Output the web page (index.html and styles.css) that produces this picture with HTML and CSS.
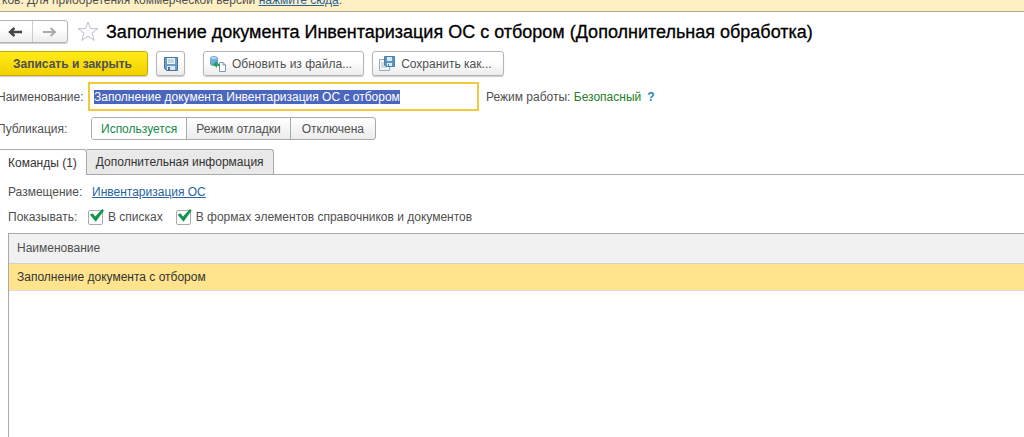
FILE: index.html
```html
<!DOCTYPE html>
<html lang="ru">
<head>
<meta charset="utf-8">
<title>Заполнение документа Инвентаризация ОС с отбором</title>
<link rel="stylesheet" href="styles.css">
</head>
<body>
<div class="notice"><p class="notice-text">ков. Для приобретения коммерческой версии <a href="#">нажмите сюда</a>.</p></div>
<main class="form">
  <header class="heading">
    <div class="history">
      <button type="button" aria-label="Назад"><svg width="14" height="10" viewBox="0 0 14 10"><path d="M14 5H3M6.500 1L2 5l4.500 4" fill="none" stroke="#444" stroke-width="2.400"/></svg></button>
      <button type="button" aria-label="Вперед"><svg width="14" height="10" viewBox="0 0 14 10"><path d="M0 5h11M7.500 1L12 5 7.500 9" fill="none" stroke="#aaa" stroke-width="2"/></svg></button>
    </div>
    <button type="button" class="star" aria-label="Избранное"><svg width="22" height="21" viewBox="0 0 22 21"><path d="M11 1.200l2.500 6.500h7.300l-5.800 4.500 2.200 7.200L11 15.200l-6.200 4.200L7 12.200 1.200 7.700h7.300z" fill="#fff" stroke="#b9bec8"/></svg></button>
    <h1>Заполнение документа Инвентаризация ОС с отбором (Дополнительная обработка)</h1>
  </header>
  <div class="toolbar">
    <button type="button" class="btn primary">Записать и закрыть</button>
    <button type="button" class="btn icon-only" aria-label="Записать"><svg width="14" height="14" viewBox="0 0 14 14"><path d="M.5.500h13v13h-11l-2-2z" fill="#6e9cc5" stroke="#46749f"/><path d="M3 1h8v6H3z" fill="#edf4fa"/><path d="M4 3h6M4 5h6" stroke="#9bb9d3"/><path d="M3 9h8v4H3z" fill="#dce6ed"/><path d="M4 10h2v3H4z" fill="#46749f"/></svg></button>
    <button type="button" class="btn update"><svg width="16" height="16" viewBox="0 0 16 16"><path d="M.5 2v6c0 2 7 2 7 0V2z" fill="#6faed8" stroke="#67a3cc"/><ellipse cx="4" cy="2" rx="3.500" ry="1.500" fill="#b9ddf2" stroke="#79b1d5"/><path d="M9.500 6.500h3.500l2.500 2.500v6.500h-6z" fill="#fff" stroke="#8298ad"/><path d="M13 6.500V9h2.500" fill="none" stroke="#8298ad"/><path d="M3 8.500L7 5v2.300c2 0 3 1.500 3 4.200-1-1.200-1.700-1.700-3-1.700V12z" fill="#2aa052"/></svg>Обновить из файла...</button>
    <button type="button" class="btn"><svg width="16" height="16" viewBox="0 0 16 16"><path d="M.5 3.500h10v11H.5z" fill="#f5f8fa" stroke="#91a8bd"/><path d="M2 7h3M2 9h4M2 11h6" stroke="#b0bfcd"/><path d="M5.500.500h10v10H7l-1.500-1.500z" fill="#5e94c1" stroke="#4a7dab"/><path d="M8 1h5v4H8z" fill="#d9ebf6"/><path d="M8 7h5v3H8z" fill="#e5edf3"/><path d="M9 8h1v2H9z" fill="#4a7dab"/></svg>Сохранить как...</button>
  </div>
  <div class="field">
    <label class="caption" for="name">Наименование:</label>
    <input class="name" id="name" type="text" value="Заполнение документа Инвентаризация ОС с отбором" autofocus>
    <span class="mode">Режим работы: <span class="safe">Безопасный</span></span>
    <a class="help" href="#">?</a>
  </div>
  <div class="publication">
    <span class="caption" id="publication">Публикация:</span>
    <div class="segments" role="group" aria-labelledby="publication">
      <button type="button" class="active" aria-pressed="true">Используется</button>
      <button type="button">Режим отладки</button>
      <button type="button">Отключена</button>
    </div>
  </div>
  <div class="tabs" role="tablist">
    <button type="button" role="tab" class="active" aria-selected="true">Команды (1)</button>
    <button type="button" role="tab" aria-selected="false">Дополнительная информация</button>
  </div>
  <section class="panel">
    <div class="placement"><span class="label">Размещение:</span><a href="#">Инвентаризация ОС</a></div>
    <div class="show">
      <span class="label">Показывать:</span>
      <label class="check"><input type="checkbox" checked>В списках</label>
      <label class="check"><input type="checkbox" checked>В формах элементов справочников и документов</label>
    </div>
    <div class="grid">
      <table>
        <thead><tr><th>Наименование</th></tr></thead>
        <tbody><tr><td>Заполнение документа с отбором</td></tr></tbody>
      </table>
    </div>
  </section>
</main>
<script src="form.js"></script>
</body>
</html>
```
FILE: styles.css
```css
* { box-sizing: border-box; }
body {
  margin: 0;
  min-height: 100vh;
  display: flex;
  flex-direction: column;
  overflow: hidden;
  background: #fff;
  color: #505050;
  font: 12px/16px "Liberation Sans", Arial, sans-serif;
}
button, input { font: inherit; color: inherit; }
button { padding: 0; }
a { color: #2a639c; }
svg { display: block; flex: none; }
.notice {
  height: 12px;
  display: flex;
  align-items: flex-end;
  background: #fff0c4;
  border-bottom: 1px solid #aaa79f;
}
.notice-text { margin: 0 0 3px 2px; white-space: nowrap; }
.form { flex: 1; display: flex; flex-direction: column; margin-left: -3px; }
.heading { display: flex; align-items: center; margin-top: 8px; height: 23px; }
.history {
  display: flex;
  width: 71px;
  height: 23px;
  border: 1px solid #b5b5b5;
  border-radius: 3px;
  background: linear-gradient(#fff 40%, #ececec);
  box-shadow: 0 1px 1px #ccc;
}
.history button {
  flex: 1;
  display: grid;
  place-items: center;
  border: 0;
  background: none;
}
.history button + button { border-left: 1px solid #ccc; }
.star { margin-left: 9px; border: 0; background: none; }
h1 {
  margin: 0 0 0 7px;
  color: #000;
  font-size: 18px;
  line-height: 22px;
  font-weight: 400;
  -webkit-text-stroke: 0.3px #000;
  white-space: nowrap;
}
.toolbar { display: flex; margin-top: 8px; }
.btn {
  display: flex;
  align-items: center;
  gap: 6px;
  height: 25px;
  padding: 0 11px 0 6px;
  border: 1px solid #b5b5b5;
  border-radius: 3px;
  background: linear-gradient(#fff 40%, #ececec);
  box-shadow: 0 1px 1px #ccc;
  white-space: nowrap;
}
.btn.primary {
  justify-content: center;
  width: 151px;
  padding: 0;
  border-color: #c9a900;
  background: linear-gradient(#ffec18, #f2d000);
  font-weight: 700;
}
.icon-only { justify-content: center; width: 29px; padding: 0; margin-left: 8px; }
.update { margin: 0 8px 0 18px; }
.field { display: flex; align-items: center; margin-top: 6px; }
.caption { width: 91px; flex: none; }
.name {
  width: 391px;
  height: 29px;
  padding: 0 4px;
  border: 2px solid #f0c93c;
  outline: 0;
  background: #fff;
}
.name::selection { background: #4a66bd; color: #fff; }
.mode { margin-left: 7px; }
.safe { color: #238023; }
.help { margin-left: 6px; color: #2682bd; font-weight: 700; text-decoration: none; }
.publication { display: flex; align-items: center; margin-top: 6px; }
.segments {
  display: flex;
  border: 1px solid #aaa;
  border-radius: 3px;
  background: linear-gradient(#fff, #ececec);
  overflow: hidden;
}
.publication .caption { width: 94px; }
.segments button { height: 21px; padding: 0 9px; border: 0; background: none; }
.segments button + button { border-left: 1px solid #aaa; }
.segments button:last-child { padding: 0 11px; }
.segments .active { background: #fff; color: #158a4b; }
.tabs { display: flex; margin-top: 9px; border-bottom: 1px solid #aaa; }
.tabs button {
  height: 25px;
  padding: 0 9px;
  border: 1px solid #aaa;
  border-left-width: 0;
  border-bottom: 0;
  border-radius: 0 3px 0 0;
  background: #e9e9e9;
  color: #333;
}
.tabs .active {
  padding-left: 11px;
  margin-bottom: -1px;
  height: 26px;
  background: #fff;
}
.panel { flex: 1; display: flex; flex-direction: column; padding: 9px 0 0 11px; }
.placement, .show { display: flex; align-items: center; }
.show { margin-top: 8px; height: 18px; }
.label { width: 84px; flex: none; }
.show .label { width: 80px; }
.check { display: flex; align-items: center; gap: 5px; margin-right: 13px; }
.check input {
  appearance: none;
  width: 15px;
  height: 15px;
  margin: 0;
  border: 1px solid #aaa;
  border-radius: 2px;
  background: #fff;
  display: grid;
  place-items: center;
}
.check input:checked::before {
  content: "";
  width: 15px;
  height: 13px;
  margin-top: -3px;
  background: #159451;
  clip-path: polygon(6% 44%, 24% 32%, 42% 58%, 88% 0, 100% 12%, 45% 98%);
}
.grid { flex: 1; margin-top: 7px; border: 1px solid #aaa; border-width: 1px 0 0 1px; }
table { width: 100%; border-collapse: collapse; }
th, td { padding: 0 8px; text-align: left; font-weight: 400; }
th { height: 29px; background: #f1f1f1; border-bottom: 1px solid #d2d2d2; }
td { height: 27px; background: #ffe48d; border-top: 1px solid #fff; border-bottom: 1px solid #ddd; color: #333; }
```
FILE: form.js
```js
const nameField = document.getElementById("name");
nameField.focus();
nameField.select();
```
